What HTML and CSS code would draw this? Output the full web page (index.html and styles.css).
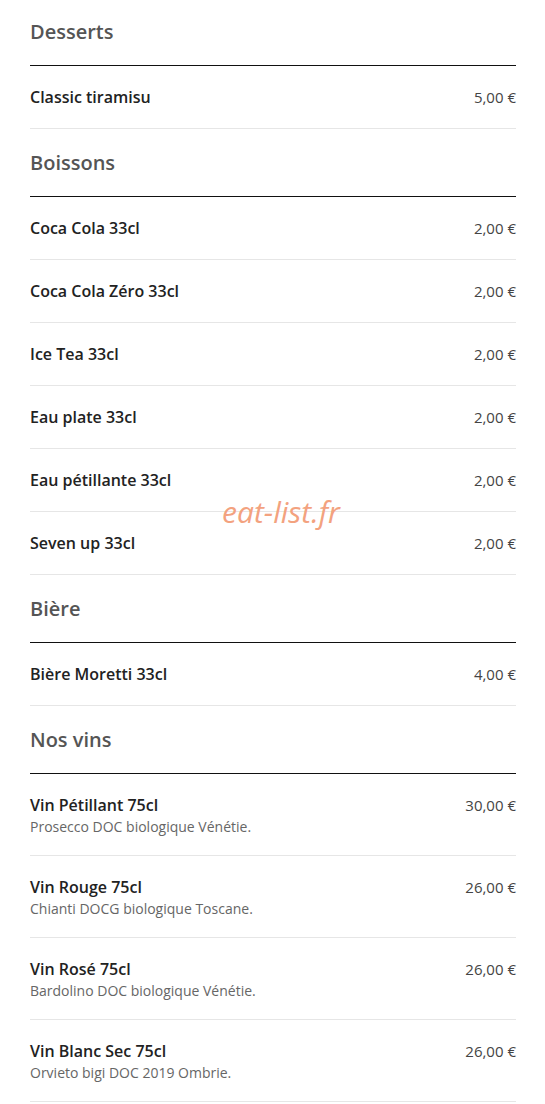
FILE: index.html
```html
<!DOCTYPE html>
<html lang="fr">
<head>
    <meta charset="UTF-8">
    <meta name="viewport" content="width=device-width, initial-scale=1.0">
    <title>Carte</title>
    <link rel="stylesheet" href="styles.css">
</head>
<body>
    <div class="menu">
        <h2 class="section-title first">Desserts</h2>
        <div class="item">
            <div class="item-info"><div class="item-name">Classic tiramisu</div></div>
            <div class="item-price">5,00 €</div>
        </div>

        <h2 class="section-title">Boissons</h2>
        <div class="item">
            <div class="item-info"><div class="item-name">Coca Cola 33cl</div></div>
            <div class="item-price">2,00 €</div>
        </div>
        <div class="item">
            <div class="item-info"><div class="item-name">Coca Cola Zéro 33cl</div></div>
            <div class="item-price">2,00 €</div>
        </div>
        <div class="item">
            <div class="item-info"><div class="item-name">Ice Tea 33cl</div></div>
            <div class="item-price">2,00 €</div>
        </div>
        <div class="item">
            <div class="item-info"><div class="item-name">Eau plate 33cl</div></div>
            <div class="item-price">2,00 €</div>
        </div>
        <div class="item">
            <div class="item-info"><div class="item-name">Eau pétillante 33cl</div></div>
            <div class="item-price">2,00 €</div>
        </div>
        <div class="item">
            <div class="item-info"><div class="item-name">Seven up 33cl</div></div>
            <div class="item-price">2,00 €</div>
        </div>

        <h2 class="section-title">Bière</h2>
        <div class="item">
            <div class="item-info"><div class="item-name">Bière Moretti 33cl</div></div>
            <div class="item-price">4,00 €</div>
        </div>

        <h2 class="section-title">Nos vins</h2>
        <div class="item">
            <div class="item-info">
                <div class="item-name">Vin Pétillant 75cl</div>
                <div class="item-desc">Prosecco DOC biologique Vénétie.</div>
            </div>
            <div class="item-price">30,00 €</div>
        </div>
        <div class="item">
            <div class="item-info">
                <div class="item-name">Vin Rouge 75cl</div>
                <div class="item-desc">Chianti DOCG biologique Toscane.</div>
            </div>
            <div class="item-price">26,00 €</div>
        </div>
        <div class="item">
            <div class="item-info">
                <div class="item-name">Vin Rosé 75cl</div>
                <div class="item-desc">Bardolino DOC biologique Vénétie.</div>
            </div>
            <div class="item-price">26,00 €</div>
        </div>
        <div class="item">
            <div class="item-info">
                <div class="item-name">Vin Blanc Sec 75cl</div>
                <div class="item-desc">Orvieto bigi DOC 2019 Ombrie.</div>
            </div>
            <div class="item-price">26,00 €</div>
        </div>
    </div>
    <div class="watermark">eat-list.fr</div>
</body>
</html>
```

FILE: styles.css
```css
body {
    margin: 0;
    background: #fff;
    font-family: "Open Sans", Arial, sans-serif;
    color: #222;
    position: relative;
}

.menu {
    width: 486px;
    margin: -2px 0 0 30px;
}

/* Category headings */
.section-title {
    margin: 0;
    padding: 20px 0 19px;
    font-size: 20px;
    line-height: 28px;
    font-weight: 600;
    color: #555;
    border-bottom: 1px solid #111;
}

/* Menu rows */
.item {
    display: flex;
    justify-content: space-between;
    align-items: flex-start;
    padding: 19px 0;
    border-bottom: 1px solid #e6e6e6;
}

.item-name {
    font-size: 16px;
    line-height: 24px;
    font-weight: 600;
    color: #222;
}

.item-desc {
    font-size: 14px;
    line-height: 19px;
    color: #666;
}

.item-price {
    font-size: 15px;
    line-height: 24px;
    color: #444;
}

.watermark {
    position: absolute;
    top: 492px;
    left: 222px;
    font-size: 30px;
    line-height: 40px;
    font-style: italic;
    color: #f3a27f;
}
```
